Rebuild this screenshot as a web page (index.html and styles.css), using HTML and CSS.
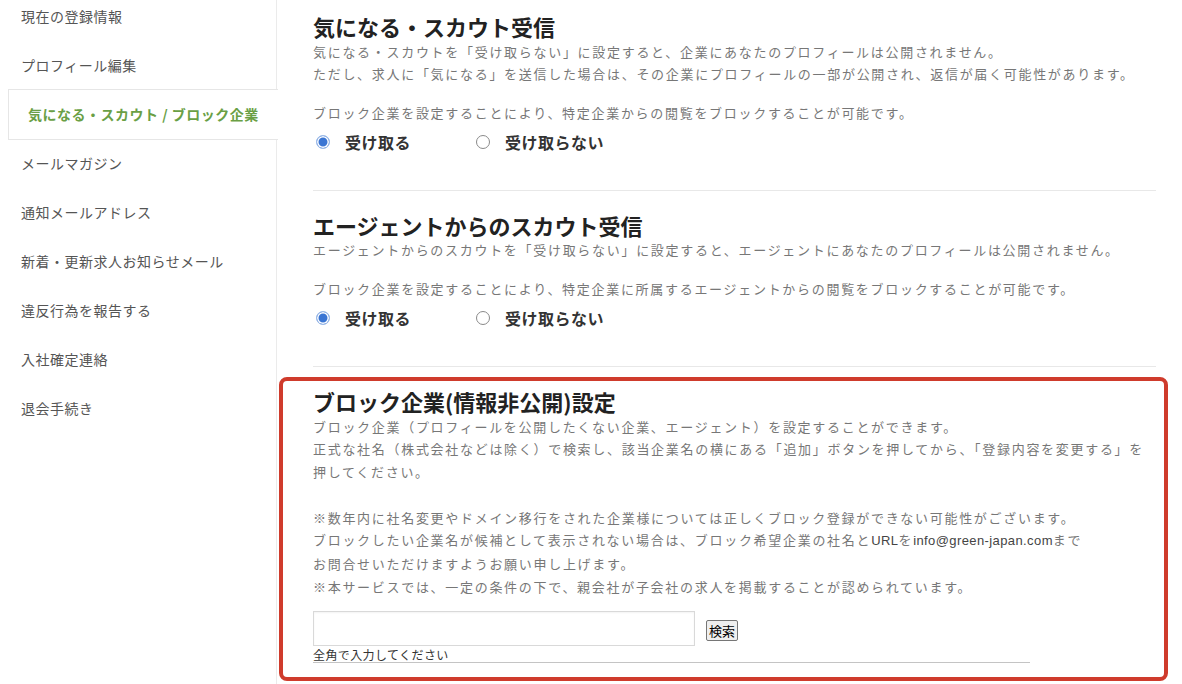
FILE: index.html
```html
<!DOCTYPE html>
<html lang="ja">
<head>
<meta charset="utf-8">
<title>気になる・スカウト / ブロック企業</title>
<link rel="stylesheet" href="styles.css">
</head>
<body>
<div class="page">
  <nav class="sidebar">
    <ul class="menu">
      <li class="menu-item">現在の登録情報</li>
      <li class="menu-item">プロフィール編集</li>
      <li class="menu-item active">気になる・スカウト / ブロック企業</li>
      <li class="menu-item">メールマガジン</li>
      <li class="menu-item">通知メールアドレス</li>
      <li class="menu-item">新着・更新求人お知らせメール</li>
      <li class="menu-item">違反行為を報告する</li>
      <li class="menu-item">入社確定連絡</li>
      <li class="menu-item">退会手続き</li>
    </ul>
  </nav>
  <main class="content">
    <section class="setting">
      <h2 class="setting-title">気になる・スカウト受信</h2>
      <p class="setting-text">気になる・スカウトを「受け取らない」に設定すると、企業にあなたのプロフィールは公開されません。<br>ただし、求人に「気になる」を送信した場合は、その企業にプロフィールの一部が公開され、返信が届く可能性があります。</p>
      <p class="setting-text">ブロック企業を設定することにより、特定企業からの閲覧をブロックすることが可能です。</p>
      <div class="radios">
        <label class="radio"><input class="radio-mark" type="radio" name="scout" checked>受け取る</label>
        <label class="radio"><input class="radio-mark" type="radio" name="scout">受け取らない</label>
      </div>
    </section>
    <section class="setting">
      <h2 class="setting-title">エージェントからのスカウト受信</h2>
      <p class="setting-text">エージェントからのスカウトを「受け取らない」に設定すると、エージェントにあなたのプロフィールは公開されません。</p>
      <p class="setting-text">ブロック企業を設定することにより、特定企業に所属するエージェントからの閲覧をブロックすることが可能です。</p>
      <div class="radios">
        <label class="radio"><input class="radio-mark" type="radio" name="agent" checked>受け取る</label>
        <label class="radio"><input class="radio-mark" type="radio" name="agent">受け取らない</label>
      </div>
    </section>
    <section class="setting highlight">
      <h2 class="setting-title">ブロック企業(情報非公開)設定</h2>
      <p class="setting-text">ブロック企業（プロフィールを公開したくない企業、エージェント）を設定することができます。<br>正式な社名（株式会社などは除く）で検索し、該当企業名の横にある「追加」ボタンを押してから、「登録内容を変更する」を押してください。<br><br>※数年内に社名変更やドメイン移行をされた企業様については正しくブロック登録ができない可能性がございます。<br>ブロックしたい企業名が候補として表示されない場合は、ブロック希望企業の社名と<span class="latin">URL</span>を<span class="latin">info@green-japan.com</span>まで<br>お問合せいただけますようお願い申し上げます。<br>※本サービスでは、一定の条件の下で、親会社が子会社の求人を掲載することが認められています。</p>
      <div class="search-row">
        <input class="search-input" type="text">
        <button class="search-button" type="button">検索</button>
      </div>
      <div class="search-hint">全角で入力してください</div>
    </section>
  </main>
</div>
</body>
</html>
```
FILE: styles.css
```css
html, body {
  margin: 0;
  padding: 0;
  background: #fff;
  font-family: "Noto Sans CJK JP", sans-serif;
}

.page {
  display: flex;
  height: 684px;
  overflow: hidden;
}

.sidebar {
  width: 276px;
  flex: none;
  border-right: 1px solid #ebebeb;
}

.menu {
  list-style: none;
  margin: -8px 0 0;
  padding: 0;
}

.menu-item {
  height: 49px;
  line-height: 49px;
  padding-left: 21px;
  font-size: 14px;
  color: #555;
  letter-spacing: 0.5px;
  white-space: nowrap;
}

.menu-item.active {
  box-sizing: border-box;
  height: 51px;
  line-height: 49px;
  margin: -1px -2px -1px 8px;
  padding-left: 19px;
  border: 1px solid #e6e6e6;
  border-right: none;
  background: #fff;
  color: #6a9f45;
  font-weight: bold;
  position: relative;
}

.content {
  flex: 1;
  padding: 12px 26px 0 36px;
}

.setting {
  padding-bottom: 34px;
  border-bottom: 1px solid #e8e8e8;
  margin-bottom: 20px;
}

.setting-title {
  margin: 0;
  font-size: 22px;
  line-height: 28.6px;
  font-weight: bold;
  color: #222;
}

.setting-text {
  margin: 0;
  font-size: 13px;
  line-height: 22.75px;
  color: #777;
  letter-spacing: 1.7px;
}

.setting-text + .setting-text {
  margin-top: 16px;
}

.latin {
  font-family: "Liberation Sans", sans-serif;
  color: #444;
  letter-spacing: 0.4px;
}

.radios {
  display: flex;
  align-items: center;
  height: 28px;
  margin-top: 3px;
}

.radio {
  display: flex;
  align-items: center;
  margin-right: 62px;
  font-size: 16px;
  font-weight: bold;
  color: #333;
  letter-spacing: 0.5px;
}

.radio-mark {
  appearance: none;
  -webkit-appearance: none;
  box-sizing: border-box;
  width: 14px;
  height: 14px;
  margin: 0 15px 0 3px;
  border-radius: 50%;
  border: 1px solid #8a8a8a;
  background: #fff;
}

.radio-mark:checked {
  border: 1.5px solid #9dbbe8;
  background: #3a75d3;
  box-shadow: inset 0 0 0 1.5px #fff;
}

.setting.highlight {
  border: 4px solid #cf3b2c;
  border-radius: 8px;
  margin: -10px -12px 0 -34px;
  padding: 6px 6px 14px 30px;
}

.search-row {
  display: flex;
  align-items: center;
  gap: 11px;
  margin-top: 12px;
}

.search-input {
  box-sizing: border-box;
  width: 382px;
  height: 35px;
  margin: 0;
  border: 1px solid #d9d9d9;
  box-shadow: inset 0 1px 2px rgba(0, 0, 0, 0.05);
}

.search-button {
  box-sizing: border-box;
  height: 21px;
  margin-top: 4px;
  padding: 0 2px;
  font-family: "Noto Sans CJK JP", sans-serif;
  font-size: 13px;
  line-height: 19px;
  color: #000;
  background: #efefef;
  border: 1px solid #767676;
  border-radius: 2px;
}

.search-hint {
  width: 717px;
  margin-top: 2px;
  font-size: 12px;
  line-height: 14px;
  color: #333;
  letter-spacing: 0.4px;
  border-bottom: 1px solid #c4c4c4;
}
```
